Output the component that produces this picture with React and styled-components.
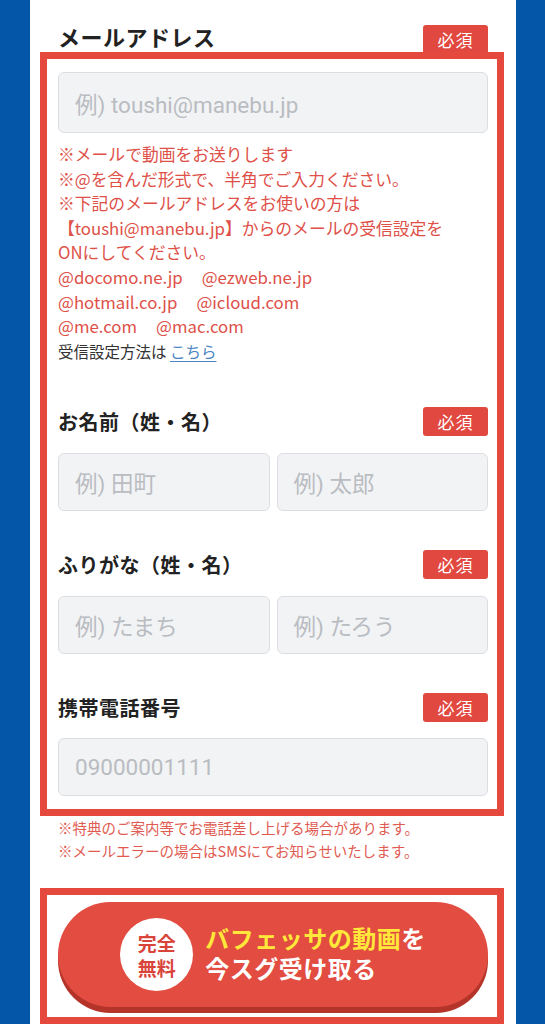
import React from "react"
import styled, { createGlobalStyle } from "styled-components"

const GlobalStyle = createGlobalStyle`
    html, body {
        margin: 0;
        padding: 0;
        background: #0356a8;
    }
    body {
        font-family: "Noto Sans CJK JP", "Noto Sans", sans-serif;
        overflow: hidden;
    }
`

const Card = styled.div`
    background: #fff;
    margin: -12px 29px 0 30px;
    padding-top: 37px;
    border-radius: 12px;
    height: 1040px;
`

const Highlight = styled.div`
    position: relative;
    border: 7px solid #e5493d;
    margin: 0 12px 0 10px;
    padding: ${(p) => p.$pad || "13px 9px 13px 11px"};
`

const FieldHead = styled.div`
    display: flex;
    align-items: center;
    justify-content: space-between;
    height: 29px;
    padding: ${(p) => (p.$outside ? "0 28px" : "0")};
`

const Label = styled.h2`
    margin: 0 0 ${(p) => (p.$big ? "7px" : "0")};
    font-size: ${(p) => (p.$big ? "22px" : "20px")};
    font-weight: 700;
    color: #222;
    letter-spacing: 0.5px;
    line-height: 1;
`

const Required = styled.span`
    display: inline-flex;
    align-items: center;
    justify-content: center;
    width: 65px;
    height: 29px;
    border-radius: 3px;
    background: #e1483f;
    color: #fff;
    font-size: 17px;
    letter-spacing: 1px;
`

const EmailHead = styled(FieldHead)`
    margin-bottom: -2px;
`

const InputRow = styled.div`
    display: flex;
    gap: 7px;
    margin-top: ${(p) => p.$top || "17px"};
`

const Input = styled.div`
    flex: 1;
    box-sizing: border-box;
    height: ${(p) => p.$h || "58px"};
    border: 1px solid #dcdee2;
    border-radius: 6px;
    background: #f2f3f5;
    display: flex;
    align-items: center;
    padding-left: 16px;
    font-family: Roboto, "Noto Sans CJK JP", sans-serif;
    font-size: 22.5px;
    color: #b9bcc1;
`

const Notes = styled.div`
    margin-top: 9px;
    font-size: 16.8px;
    line-height: 24.6px;
    color: #de5048;
`

const Plain = styled.div`
    color: #333;
    font-size: 15.5px;
`

const Link = styled.a`
    color: #4a85c4;
    text-decoration: underline;
    text-underline-offset: 3px;
`

const Spaced = styled.span`
    margin-left: 19px;
`

const Field = styled.div`
    margin-top: ${(p) => p.$top || "39px"};
`

const Footnote = styled.div`
    padding: 0 28px;
    font-size: 14.5px;
    line-height: 23px;
    color: #df5a51;
`

const ButtonBox = styled(Highlight)`
    margin-top: 26px;
`

const CtaButton = styled.div`
    height: 105px;
    border-radius: 53px;
    background: #e24c41;
    box-shadow: 0 6px 0 #b43429;
    display: flex;
    align-items: center;
    justify-content: center;
    gap: 12px;
    cursor: pointer;
`

const FreeBadge = styled.span`
    flex: none;
    width: 73px;
    height: 73px;
    border-radius: 50%;
    background: #fff;
    color: #d9443a;
    font-size: 19px;
    font-weight: 700;
    line-height: 25px;
    display: flex;
    align-items: center;
    justify-content: center;
    text-align: center;
`

const CtaText = styled.span`
    display: flex;
    flex-direction: column;
    color: #fff;
    font-size: 24px;
    font-weight: 700;
    text-align: left;
    letter-spacing: 0.5px;
    margin-top: -3px;
`

const CtaLine = styled.span`
    display: block;
    height: 30px;
    line-height: 30px;
`

const Yellow = styled.span`
    display: inline-block;
    line-height: 30px;
    color: #ffe83a;
`

export default function App() {
    return (
        <>
            <GlobalStyle />
            <Card>
                <EmailHead $outside>
                    <Label $big>メールアドレス</Label>
                    <Required>必須</Required>
                </EmailHead>
                <Highlight>
                    <Input $h="61px">例) toushi@manebu.jp</Input>
                    <Notes>
                        ※メールで動画をお送りします
                        <br />
                        ※@を含んだ形式で、半角でご入力ください。
                        <br />
                        ※下記のメールアドレスをお使いの方は
                        <br />
                        【toushi@manebu.jp】からのメールの受信設定を
                        <br />
                        ONにしてください。
                        <br />
                        @docomo.ne.jp<Spaced>@ezweb.ne.jp</Spaced>
                        <br />
                        @hotmail.co.jp<Spaced>@icloud.com</Spaced>
                        <br />
                        @me.com<Spaced>@mac.com</Spaced>
                        <Plain>
                            受信設定方法は <Link href="#">こちら</Link>
                        </Plain>
                    </Notes>

                    <Field $top="44px">
                        <FieldHead>
                            <Label>お名前（姓・名）</Label>
                            <Required>必須</Required>
                        </FieldHead>
                        <InputRow>
                            <Input>例) 田町</Input>
                            <Input>例) 太郎</Input>
                        </InputRow>
                    </Field>

                    <Field>
                        <FieldHead>
                            <Label>ふりがな（姓・名）</Label>
                            <Required>必須</Required>
                        </FieldHead>
                        <InputRow>
                            <Input>例) たまち</Input>
                            <Input>例) たろう</Input>
                        </InputRow>
                    </Field>

                    <Field>
                        <FieldHead>
                            <Label>携帯電話番号</Label>
                            <Required>必須</Required>
                        </FieldHead>
                        <InputRow $top="16px">
                            <Input>09000001111</Input>
                        </InputRow>
                    </Field>
                </Highlight>

                <Footnote>
                    ※特典のご案内等でお電話差し上げる場合があります。
                    <br />
                    ※メールエラーの場合はSMSにてお知らせいたします。
                </Footnote>

                <ButtonBox $pad="7px 9px 10px 11px">
                    <CtaButton role="button">
                        <FreeBadge>
                            完全
                            <br />
                            無料
                        </FreeBadge>
                        <CtaText>
                            <CtaLine>
                                <Yellow>バフェッサの動画</Yellow>を
                            </CtaLine>
                            <CtaLine>今スグ受け取る</CtaLine>
                        </CtaText>
                    </CtaButton>
                </ButtonBox>
            </Card>
        </>
    )
}
